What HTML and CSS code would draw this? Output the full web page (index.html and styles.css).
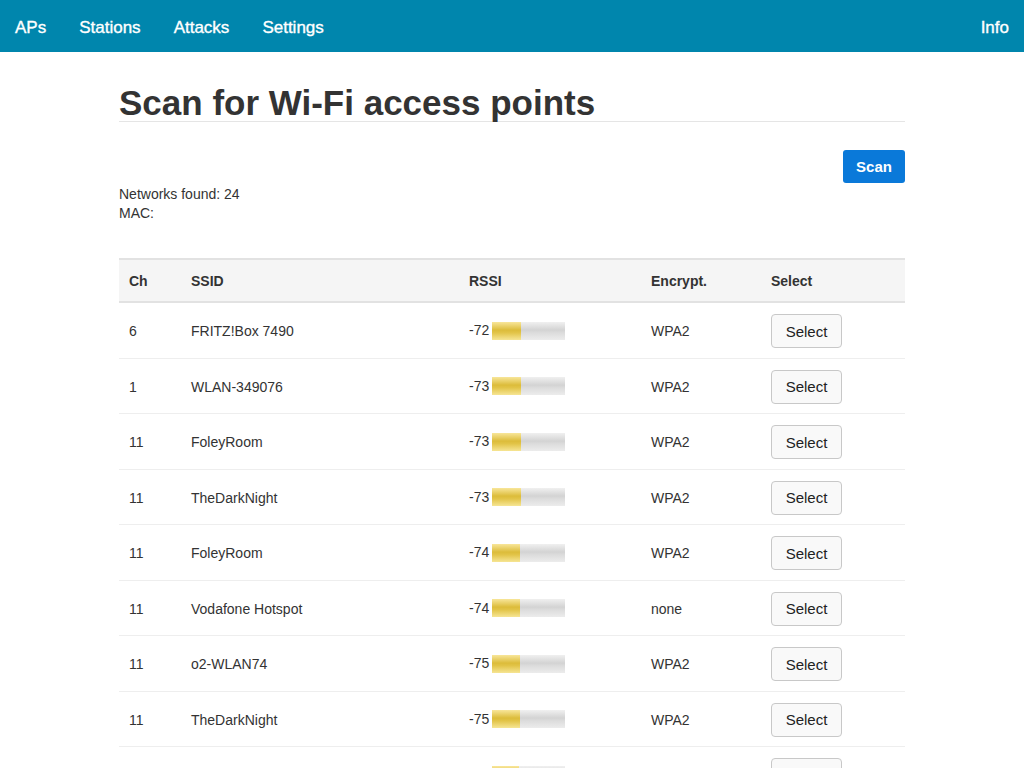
FILE: index.html
```html
<!DOCTYPE html>
<html>
<head>
<meta charset="utf-8">
<link rel="stylesheet" href="styles.css">
</head>
<body>
<nav class="nav">
  <div class="nav-left">
    <a class="nav-link" href="#">APs</a>
    <a class="nav-link" href="#">Stations</a>
    <a class="nav-link" href="#">Attacks</a>
    <a class="nav-link" href="#">Settings</a>
  </div>
  <a class="nav-link" href="#">Info</a>
</nav>
<main class="container">
  <h1 class="title">Scan for Wi-Fi access points</h1>
  <div class="actions"><button class="btn-scan">Scan</button></div>
  <p class="info">Networks found: 24<br>MAC: </p>
  <table class="aps">
    <thead>
      <tr><th class="c-ch">Ch</th><th class="c-ssid">SSID</th><th class="c-rssi">RSSI</th><th class="c-enc">Encrypt.</th><th class="c-sel">Select</th></tr>
    </thead>
    <tbody>
      <tr><td>6</td><td>FRITZ!Box 7490</td><td>-72<span class="meter"><span class="meter-fill" style="width:40%"></span></span></td><td>WPA2</td><td><button class="btn-select">Select</button></td></tr>
      <tr><td>1</td><td>WLAN-349076</td><td>-73<span class="meter"><span class="meter-fill" style="width:39%"></span></span></td><td>WPA2</td><td><button class="btn-select">Select</button></td></tr>
      <tr><td>11</td><td>FoleyRoom</td><td>-73<span class="meter"><span class="meter-fill" style="width:39%"></span></span></td><td>WPA2</td><td><button class="btn-select">Select</button></td></tr>
      <tr><td>11</td><td>TheDarkNight</td><td>-73<span class="meter"><span class="meter-fill" style="width:39%"></span></span></td><td>WPA2</td><td><button class="btn-select">Select</button></td></tr>
      <tr><td>11</td><td>FoleyRoom</td><td>-74<span class="meter"><span class="meter-fill" style="width:38.5%"></span></span></td><td>WPA2</td><td><button class="btn-select">Select</button></td></tr>
      <tr><td>11</td><td>Vodafone Hotspot</td><td>-74<span class="meter"><span class="meter-fill" style="width:38.5%"></span></span></td><td>none</td><td><button class="btn-select">Select</button></td></tr>
      <tr><td>11</td><td>o2-WLAN74</td><td>-75<span class="meter"><span class="meter-fill" style="width:38%"></span></span></td><td>WPA2</td><td><button class="btn-select">Select</button></td></tr>
      <tr><td>11</td><td>TheDarkNight</td><td>-75<span class="meter"><span class="meter-fill" style="width:38%"></span></span></td><td>WPA2</td><td><button class="btn-select">Select</button></td></tr>
      <tr><td>1</td><td>WLAN-471962</td><td>-76<span class="meter"><span class="meter-fill" style="width:37%"></span></span></td><td>WPA2</td><td><button class="btn-select">Select</button></td></tr>
      <tr><td>6</td><td>EasyBox-123456</td><td>-78<span class="meter"><span class="meter-fill" style="width:35%"></span></span></td><td>WPA2</td><td><button class="btn-select">Select</button></td></tr>
    </tbody>
  </table>
</main>
</body>
</html>
```
FILE: styles.css
```css
* { box-sizing: border-box; }
html, body { margin: 0; padding: 0; background: #fff; }
body {
  font-family: "Liberation Sans", Arial, sans-serif;
  font-size: 14px;
  color: #333;
}
.nav {
  height: 52px;
  background: #0086ad;
  display: flex;
  align-items: center;
  justify-content: space-between;
  padding: 3px 15px 0;
}
.nav-left { display: flex; gap: 33px; }
.nav-link {
  color: #fff;
  text-decoration: none;
  font-size: 17px;
  -webkit-text-stroke: 0.35px #fff;
}
.container {
  width: 786px;
  margin: 0 auto;
  padding-bottom: 40px;
}
.title {
  margin: 32px 0 0;
  font-size: 35px;
  line-height: 37px;
  font-weight: bold;
  color: #333;
  border-bottom: 1px solid #e5e5e5;
}
.actions {
  display: flex;
  justify-content: flex-end;
  margin-top: 28px;
}
.btn-scan {
  width: 62px;
  height: 33px;
  border: none;
  border-radius: 3px;
  background: #0a79d9;
  color: #fff;
  font-family: "Liberation Sans", Arial, sans-serif;
  font-size: 15px;
  font-weight: bold;
  padding: 0;
}
.info {
  margin: 2px 0 0;
  line-height: 19px;
}
.aps {
  margin-top: 35px;
  width: 786px;
  border-collapse: collapse;
  table-layout: fixed;
}
.c-ch { width: 62px; }
.c-ssid { width: 278px; }
.c-rssi { width: 182px; }
.c-enc { width: 120px; }
.c-sel { width: 144px; }
.aps th {
  background: #f5f5f5;
  text-align: left;
  font-weight: bold;
  height: 43px;
  padding: 0 10px;
  border-top: 2px solid #e2e2e2;
  border-bottom: 2px solid #e2e2e2;
}
.aps td {
  padding: 11px 10px 9.5px;
  border-bottom: 1px solid #eee;
  vertical-align: middle;
  white-space: nowrap;
}
.meter {
  display: inline-block;
  vertical-align: middle;
  width: 73px;
  height: 18px;
  margin-left: 3px;
  margin-top: -1px;
  background: linear-gradient(#f0f0f0, #d3d3d3 45%, #dcdcdc 60%, #ececec);
  overflow: hidden;
}
.meter-fill {
  display: block;
  height: 100%;
  background: linear-gradient(#f8e69a, #dcbc3a 45%, #e2c448 60%, #f6e594);
}
.btn-select {
  width: 71px;
  height: 34px;
  border: 1px solid #c8c8c8;
  border-radius: 4px;
  background: #f9f9f9;
  color: #222;
  font-family: "Liberation Sans", Arial, sans-serif;
  font-size: 15px;
  padding: 0;
  display: block;
}
```
